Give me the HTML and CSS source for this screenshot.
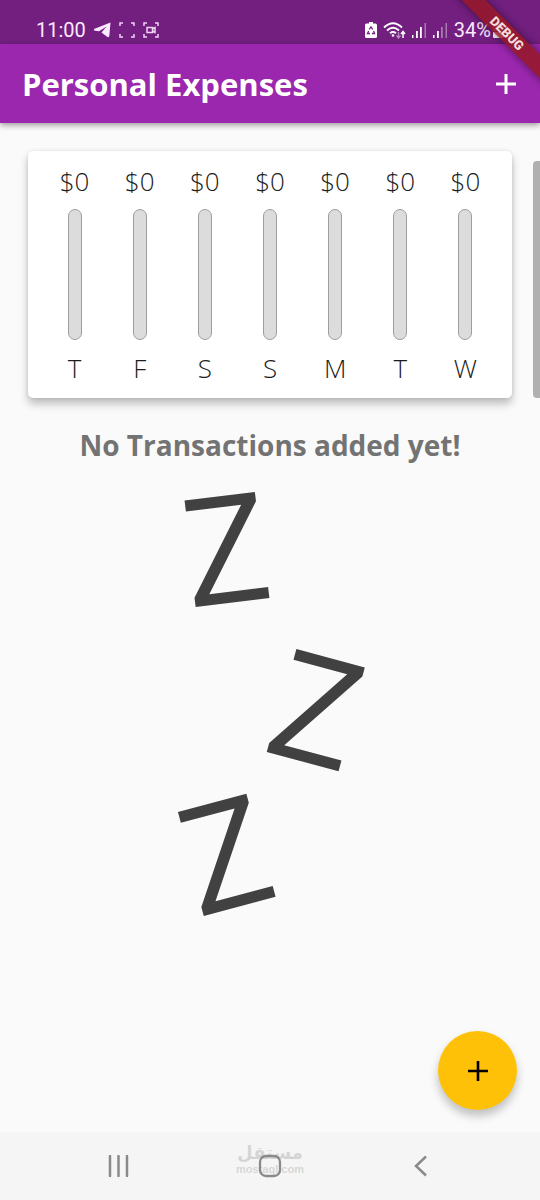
FILE: index.html
```html
<!DOCTYPE html>
<html lang="en">
<head>
<meta charset="utf-8">
<meta name="viewport" content="width=device-width, initial-scale=1">
<title>Personal Expenses</title>
<link rel="stylesheet" href="styles.css">
</head>
<body class="app">
<div class="status">
  <div class="status-group status-left">
    <span>11:00</span>
    <svg width="17" height="16" viewBox="0 0 17 16" fill="#fbe9ff"><path d="M16.500 0.500 0 7Q-.2 8.500 1 8.800L5 9.300 12.500 4.500 7.500 10.500 13.500 15Q15 15.500 15.300 14Z"/></svg>
    <svg width="16" height="16" viewBox="0 0 16 16" fill="none" stroke="#f0d4f5" stroke-width="1.500"><path d="M1 4V1H4M12 1H15V4M15 12V15H12M4 15H1V12"/></svg>
    <svg width="16" height="16" viewBox="0 0 16 16" fill="none" stroke="#f0d4f5" stroke-width="1.500"><path d="M1 4V1H4M12 1H15V4M15 12V15H12M4 15H1V12M4 5.500H9.500V10.500H4ZM9.500 7 12 5.500V10.500L9.500 9"/></svg>
  </div>
  <div class="status-group status-right">
    <svg width="12" height="16" viewBox="0 0 12 16"><path fill="#fff" d="M4 0H8V1.500H10.500Q12 1.500 12 3V14.500Q12 16 10.500 16H1.500Q0 16 0 14.500V3Q0 1.500 1.500 1.500H4Z"/><path d="M4.200 7.500 6 4.800 7.800 7.500M8.600 9 9.500 11.500H7M5 11.500H2.500L3.600 9" fill="none" stroke="#731f80" stroke-width="1.300"/></svg>
    <svg width="23" height="17" viewBox="0 0 23 17" fill="none" stroke="#fff" stroke-width="1.800"><path d="M1 5.500Q10 -3 19 5.500M4 8.500Q10 3 16 8.500M7 11.300Q10 8.800 13 11.300"/><circle cx="10" cy="13.500" r="1.300" fill="#fff" stroke="none"/><path d="M20 16V10M18 12 20 9.500 22 12" stroke-width="1.500"/><path d="M15.500 10V15M13.500 13.500 15.500 16 17.500 13.500" stroke="#b98abf" stroke-width="1.300"/></svg>
    <svg width="15" height="16" viewBox="0 0 15 16" fill="#fff"><path d="M0 13H1.500V16H0ZM4 9H5.800V16H4ZM8 5H9.800V16H8Z"/><path d="M12.500 1H14V16H12.500Z" opacity=".4"/></svg>
    <svg width="15" height="16" viewBox="0 0 15 16" fill="#fff"><path d="M0 13H1.500V16H0ZM4 9H5.800V16H4Z"/><path d="M8 5H9.800V16H8ZM12.500 1H14V16H12.500Z" opacity=".4"/></svg>
    <span>34%</span>
    <svg class="battery" width="11" height="16" viewBox="0 0 11 16" fill="#fff"><path d="M3.500 0H7.500V1.500H9.500Q11 1.500 11 3V7L7 9H0V3Q0 1.500 1.500 1.500H3.500Z" opacity=".4"/><path d="M0 10H11V14.500Q11 16 9.500 16H1.500Q0 16 0 14.500Z"/></svg>
  </div>
</div>
<header class="bar">
  <h1 class="title">Personal Expenses</h1>
  <button class="icon-button" aria-label="Add transaction">
    <svg width="20" height="20" viewBox="0 0 20 20"><path d="M10 0V20M0 10H20" stroke="#fff" stroke-width="3"/></svg>
  </button>
</header>
<main class="content">
  <ul class="chart">
    <li class="day"><span>$0</span><div class="track"></div><span>T</span></li>
    <li class="day"><span>$0</span><div class="track"></div><span>F</span></li>
    <li class="day"><span>$0</span><div class="track"></div><span>S</span></li>
    <li class="day"><span>$0</span><div class="track"></div><span>S</span></li>
    <li class="day"><span>$0</span><div class="track"></div><span>M</span></li>
    <li class="day"><span>$0</span><div class="track"></div><span>T</span></li>
    <li class="day"><span>$0</span><div class="track"></div><span>W</span></li>
  </ul>
  <h2 class="empty">No Transactions added yet!</h2>
  <svg class="sleep" width="200" height="436" viewBox="0 0 200 436">
    <g class="zed">
      <text x="-6" y="0" transform="translate(26 123) rotate(-7)">Z</text>
      <text x="-6" y="0" transform="translate(97 268) rotate(15)">Z</text>
      <text x="-6" y="0" transform="translate(34 432) rotate(-15)">Z</text>
    </g>
  </svg>
  <div class="scrollbar"></div>
  <button class="fab" aria-label="Add new">
    <svg width="20" height="20" viewBox="0 0 20 20"><path d="M10 0V20M0 10H20" stroke="#000" stroke-width="2.600"/></svg>
  </button>
</main>
<nav class="nav">
  <button class="nav-button" aria-label="Recent apps"><svg width="22" height="22" viewBox="0 0 22 22"><path d="M2 1V21M10.500 1V21M19 1V21" stroke="#8a8a8a" stroke-width="2.500" stroke-linecap="round"/></svg></button>
  <button class="nav-button" aria-label="Home"><svg width="24" height="24" viewBox="0 0 24 24"><rect x="2" y="2" width="20" height="20" rx="6" fill="none" stroke="#8a8a8a" stroke-width="2.300"/></svg></button>
  <button class="nav-button" aria-label="Back"><svg width="14" height="22" viewBox="0 0 14 22"><path d="M12 1.500 2 11 12 20.500" fill="none" stroke="#8a8a8a" stroke-width="2.500"/></svg></button>
  <div class="watermark"><span class="mark-ar" lang="ar" dir="rtl">مستقل</span><span class="mark-en">mostaql.com</span></div>
</nav>
<div class="debug"><span class="ribbon">DEBUG</span></div>
</body>
</html>
```
FILE: styles.css
```css
* {
  box-sizing: border-box;
}

.app {
  position: relative;
  display: flex;
  flex-direction: column;
  min-height: 100vh;
  margin: 0;
  background: #fafafa;
  font-family: "Open Sans", "Noto Sans", sans-serif;
}

button {
  display: grid;
  place-items: center;
  padding: 0;
  border: 0;
  background: none;
}

svg {
  display: block;
  flex: none;
}

.status {
  display: flex;
  justify-content: space-between;
  align-items: center;
  height: 44px;
  padding: 16px 36px 0;
  background: #731f80;
  color: #fbe9ff;
  font: 20px/28px Roboto, sans-serif;
}

.status-group {
  display: flex;
  align-items: center;
}

.status-left {
  gap: 8px;
}

.status-right {
  gap: 6px;
}

.battery {
  margin-left: -4px;
}

.bar {
  position: relative;
  display: flex;
  justify-content: space-between;
  align-items: center;
  height: 79px;
  padding: 0 16px 0 22px;
  background: #9b27ae;
  box-shadow: 0 2px 6px rgba(0, 0, 0, 0.4);
}

.title {
  margin: 0;
  color: #fff;
  font-size: 31px;
  font-weight: 700;
  line-height: 40px;
}

.icon-button {
  width: 36px;
  height: 48px;
}

.content {
  position: relative;
  display: flex;
  flex: 1;
  flex-direction: column;
  align-items: center;
  padding: 28px 28px 0;
}

.chart {
  display: flex;
  align-self: stretch;
  margin: 0;
  padding: 14px;
  border-radius: 5px;
  background: #fff;
  box-shadow: 0 6px 9px rgba(0, 0, 0, 0.24), 0 0 4px rgba(0, 0, 0, 0.1);
  list-style: none;
}

.day {
  display: flex;
  flex: 1;
  flex-direction: column;
  align-items: center;
  gap: 12px;
  color: #1c1c1c;
  font: 300 26px/32px "Open Sans", sans-serif;
}

.track {
  width: 14px;
  height: 131px;
  border: 1px solid #9e9e9e;
  border-radius: 7px;
  background: #dcdcdc;
}

.empty {
  margin: 28px 0 0;
  color: #737373;
  font-size: 28px;
  font-weight: 700;
  line-height: 38px;
  text-align: center;
}

.sleep {
  margin-top: 20px;
  overflow: visible;
}

.zed {
  fill: #414141;
  font-family: "Open Sans", sans-serif;
  font-size: 150px;
  font-weight: 500;
}

.scrollbar {
  position: absolute;
  top: 38px;
  right: 0;
  width: 7px;
  height: 237px;
  border-radius: 4px 0 0 4px;
  background: #b0b0b0;
}

.fab {
  position: absolute;
  right: 23px;
  bottom: 22px;
  width: 79px;
  height: 79px;
  border-radius: 50%;
  background: #ffc107;
  box-shadow: 0 6px 10px rgba(0, 0, 0, 0.24);
}

.nav {
  position: relative;
  display: grid;
  grid-template-columns: repeat(3, 1fr);
  height: 68px;
  padding: 0 43px;
  background: #f5f5f5;
}

.watermark {
  position: absolute;
  inset: 11px 0 auto;
  display: flex;
  flex-direction: column;
  align-items: center;
  color: rgba(130, 130, 130, 0.28);
  pointer-events: none;
}

.mark-ar {
  font: 700 18px/20px "DejaVu Sans", sans-serif;
}

.mark-en {
  font: 700 11px/12px "Liberation Sans", sans-serif;
}

.debug {
  position: absolute;
  top: 0;
  right: 0;
  width: 90px;
  height: 90px;
  overflow: hidden;
}

.ribbon {
  position: absolute;
  top: 25px;
  right: -37px;
  width: 140px;
  background: rgba(150, 24, 36, 0.85);
  box-shadow: 0 0 8px rgba(0, 0, 0, 0.5);
  color: #f3dcdc;
  font: 900 13px/17px Roboto, sans-serif;
  text-align: center;
  transform: rotate(45deg);
}
```
